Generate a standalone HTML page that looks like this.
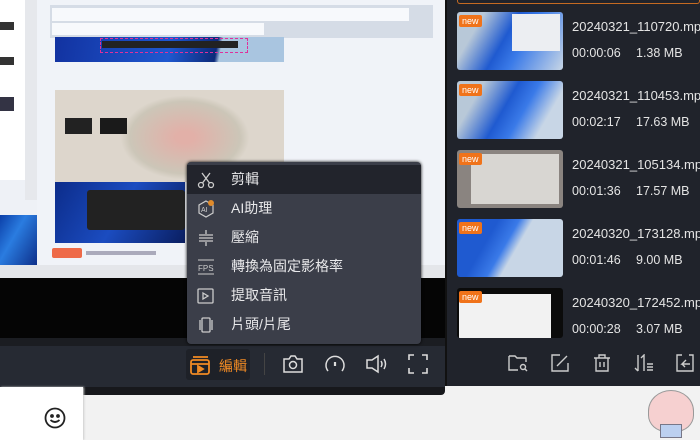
<!DOCTYPE html>
<html><head><meta charset="utf-8"><style>
*{margin:0;padding:0;box-sizing:border-box}
body{width:700px;height:440px;overflow:hidden;position:relative;background:#f2f2f2;font-family:"Liberation Sans","Noto Sans CJK TC",sans-serif}
.a{position:absolute}
.menu .it{position:absolute;left:0;width:234px;height:29px;color:#e8e8ea;font-size:14px;line-height:29px;padding-left:44px}
.menu .ic{position:absolute;left:10px;top:6px;width:18px;height:18px}
.th{position:absolute;left:457px;width:106px;height:58px;border-radius:3px;overflow:hidden}
.nw{position:absolute;left:2px;top:3px;background:#f0731a;color:#fff;font-size:9px;padding:0 3px;line-height:12px;border-radius:2px}
.nm{position:absolute;left:572px;color:#e4e4e4;font-size:13px;white-space:nowrap}
.mt{position:absolute;left:572px;color:#e4e4e4;font-size:12.5px;white-space:nowrap}
.mt b{position:absolute;left:64px;font-weight:normal}
</style></head><body>
<div class="a" style="left:0;top:0;width:445px;height:280px;background:#eef1f6"></div>
<div class="a" style="left:0;top:0;width:25px;height:180px;background:#fff"></div>
<div class="a" style="left:0;top:22px;width:14px;height:8px;background:#333"></div>
<div class="a" style="left:0;top:57px;width:14px;height:8px;background:#333"></div>
<div class="a" style="left:0;top:97px;width:14px;height:14px;background:#334"></div>
<div class="a" style="left:25px;top:0;width:12px;height:200px;background:#e6e8ec"></div>
<div class="a" style="left:0;top:215px;width:37px;height:50px;background:linear-gradient(120deg,#0b3fa8,#2a7ce0 40%,#0d2f8a)"></div>
<div class="a" style="left:37px;top:0;width:408px;height:265px;background:#f0f3f8"></div>
<div class="a" style="left:50px;top:5px;width:383px;height:33px;background:#d5dce6"></div>
<div class="a" style="left:52px;top:8px;width:357px;height:13px;background:#f7f9fc"></div>
<div class="a" style="left:52px;top:23px;width:212px;height:12px;background:#f7f9fc"></div>
<div class="a" style="left:55px;top:37px;width:229px;height:25px;background:linear-gradient(100deg,#1232a0,#1f58d0 50%,#0d2a7a 70%,#a9c5e0 72%)"></div>
<div class="a" style="left:100px;top:38px;width:148px;height:15px;border:1px dashed #e0309a"></div>
<div class="a" style="left:102px;top:41px;width:136px;height:7px;background:#222"></div>
<div class="a" style="left:55px;top:90px;width:229px;height:92px;background:#ddd6cc"></div>
<div class="a" style="left:120px;top:95px;width:130px;height:85px;background:radial-gradient(ellipse,#e2b0a8 10%,#ccc6b8 60%,transparent 70%)"></div>
<div class="a" style="left:65px;top:118px;width:27px;height:16px;background:#222"></div>
<div class="a" style="left:100px;top:118px;width:27px;height:16px;background:#1a1a1a"></div>
<div class="a" style="left:55px;top:182px;width:130px;height:61px;background:linear-gradient(120deg,#0c2c8a,#1b4cc0 50%,#0a1e60)"></div>
<div class="a" style="left:87px;top:190px;width:98px;height:40px;background:#222;border-radius:3px"></div>
<div class="a" style="left:52px;top:248px;width:30px;height:10px;background:#ee6a48;border-radius:2px"></div>
<div class="a" style="left:86px;top:251px;width:70px;height:4px;background:#aab"></div>
<div class="a" style="left:0;top:265px;width:445px;height:14px;background:#e4e6ea"></div>
<div class="a" style="left:0;top:278px;width:445px;height:62px;background:#050505"></div>
<div class="a" style="left:0;top:338px;width:445px;height:8px;background:#1b1d22"></div>
<div class="a" style="left:0;top:346px;width:445px;height:41px;background:#262a33"></div>
<div class="a" style="left:0;top:387px;width:445px;height:8px;background:#17181c;border-radius:0 0 4px 0"></div>
<div class="a" style="left:186px;top:349px;width:64px;height:31px;background:#1e2128;border-radius:3px"></div>
<svg class="a" style="left:190px;top:354px" width="22" height="22" viewBox="0 0 22 22" fill="none" stroke="#f08a24" stroke-width="1.8"><rect x="1" y="6" width="18" height="14" rx="2"/><path d="M1 10h18M3 3l15 0"/><path d="M8 12l5 3-5 3z" fill="#f08a24"/></svg>
<div class="a" style="left:219px;top:356px;color:#f08a24;font-size:14px">編輯</div>
<div class="a" style="left:264px;top:353px;width:1px;height:22px;background:#444"></div>
<svg class="a" style="left:282px;top:354px" width="22" height="20" viewBox="0 0 22 20" fill="none" stroke="#ddd" stroke-width="1.5"><path d="M2 5h5l2-3h4l2 3h5v13H2z"/><circle cx="11" cy="11" r="3.5"/></svg>
<svg class="a" style="left:324px;top:354px" width="22" height="20" viewBox="0 0 22 20" fill="none" stroke="#ddd" stroke-width="1.5"><path d="M4 17A9 9 0 1 1 18 17"/><path d="M11 8v4" stroke-width="2.2"/></svg>
<svg class="a" style="left:365px;top:354px" width="24" height="20" viewBox="0 0 24 20" fill="none" stroke="#ddd" stroke-width="1.5"><path d="M2 6h5l6-4v16l-6-4H2z"/><path d="M16 7q2 3 0 6M19 5q3 5 0 10"/></svg>
<svg class="a" style="left:408px;top:354px" width="20" height="20" viewBox="0 0 20 20" fill="none" stroke="#ddd" stroke-width="1.6"><path d="M1 6V1h5M14 1h5v5M19 14v5h-5M6 19H1v-5"/></svg>
<div class="a" style="left:0;top:387px;width:83px;height:53px;background:#fff;box-shadow:1px 0 2px #ccc"></div>
<svg class="a" style="left:44px;top:407px" width="22" height="22" viewBox="0 0 22 22" fill="none" stroke="#222" stroke-width="1.8"><circle cx="11" cy="11" r="9.5"/><circle cx="8" cy="9" r="1" fill="#222"/><circle cx="14" cy="9" r="1" fill="#222"/><path d="M6.5 13q4.5 4 9 0"/></svg>
<div class="a menu" style="left:187px;top:162px;width:234px;height:182px;background:#3b3e49;border-radius:4px;overflow:hidden;box-shadow:0 0 3px #000">
<div class="it" style="top:3px;background:#22242c">剪輯<svg class="ic" viewBox="0 0 18 18" fill="none" stroke="#ccc" stroke-width="1.3"><circle cx="4" cy="14" r="2.5"/><circle cx="14" cy="14" r="2.5"/><path d="M5.5 12L13 2M12.5 12L5 2"/></svg></div>
<div class="it" style="top:32px">AI助理<svg class="ic" viewBox="0 0 18 18" fill="none" stroke="#ccc" stroke-width="1.2"><path d="M9 1l7 4v8l-7 4-7-4V5z"/><text x="4" y="12" font-size="7" fill="#ccc" stroke="none">AI</text><circle cx="14" cy="3" r="3" fill="#e08a2a" stroke="none"/></svg></div>
<div class="it" style="top:61px">壓縮<svg class="ic" viewBox="0 0 18 18" fill="none" stroke="#ccc" stroke-width="1.3"><path d="M2 9h14M2 6h14M2 12h14M9 1v4M9 13v4"/></svg></div>
<div class="it" style="top:90px">轉換為固定影格率<svg class="ic" viewBox="0 0 18 18"><path d="M1 2h16M1 16h16" stroke="#ccc"/><text x="1" y="13" font-size="8" fill="#ccc">FPS</text></svg></div>
<div class="it" style="top:119px">提取音訊<svg class="ic" viewBox="0 0 18 18" fill="none" stroke="#ccc" stroke-width="1.3"><rect x="1" y="2" width="15" height="14" rx="1"/><path d="M6 6l5 3-5 3z"/></svg></div>
<div class="it" style="top:148px">片頭/片尾<svg class="ic" viewBox="0 0 18 18" fill="none" stroke="#ccc" stroke-width="1.3"><rect x="5" y="2" width="8" height="14" rx="1"/><path d="M3 4v10M15 4v10"/></svg></div>
</div>
<div class="a" style="left:445px;top:0;width:255px;height:386px;background:#20232b;border-left:2px solid #111"></div>
<div class="a" style="left:457px;top:0;width:243px;height:4px;border:1px solid #c46a22;border-top:none;border-radius:0 0 3px 3px"></div>
<div class="th" style="top:12px;background:linear-gradient(120deg,#b8c8d8 20%,#1f5ad0 45%,#3a7ae8 60%,#c8d6e6)"><div class="a" style="left:55px;top:2px;width:48px;height:37px;background:#eceef2"></div><span class="nw">new</span></div>
<div class="th" style="top:81px;background:linear-gradient(120deg,#b8c8d8 20%,#1f5ad0 45%,#3a7ae8 60%,#c8d6e6 80%)"><span class="nw">new</span></div>
<div class="th" style="top:150px;background:#8a8480"><div class="a" style="left:14px;top:4px;width:88px;height:50px;background:#d8d6d2"></div><span class="nw">new</span></div>
<div class="th" style="top:219px;background:linear-gradient(120deg,#1f5ad0 30%,#3a7ae8 45%,#c8d6e6 55%)"><span class="nw">new</span></div>
<div class="th" style="top:288px;height:50px;background:#0b0b0b"><div class="a" style="left:2px;top:6px;width:92px;height:44px;background:#f2f2f2"></div><span class="nw">new</span></div>
<div class="nm" style="top:19px">20240321_110720.mp</div><div class="mt" style="top:46px">00:00:06<b>1.38 MB</b></div>
<div class="nm" style="top:88px">20240321_110453.mp</div><div class="mt" style="top:115px">00:02:17<b>17.63 MB</b></div>
<div class="nm" style="top:157px">20240321_105134.mp</div><div class="mt" style="top:184px">00:01:36<b>17.57 MB</b></div>
<div class="nm" style="top:226px">20240320_173128.mp</div><div class="mt" style="top:253px">00:01:46<b>9.00 MB</b></div>
<div class="nm" style="top:295px">20240320_172452.mp</div><div class="mt" style="top:322px">00:00:28<b>3.07 MB</b></div>
<svg class="a" style="left:508px;top:354px" width="20" height="18" viewBox="0 0 20 18" fill="none" stroke="#ccc" stroke-width="1.4"><path d="M1 2h6l2 2h9v4M1 2v14h9"/><circle cx="15" cy="13" r="2.5"/><path d="M17 15l2 2"/></svg>
<svg class="a" style="left:551px;top:354px" width="18" height="18" viewBox="0 0 18 18" fill="none" stroke="#ccc" stroke-width="1.4"><path d="M9 1H1v16h16V9M6 12L16 2"/></svg>
<svg class="a" style="left:593px;top:354px" width="18" height="18" viewBox="0 0 18 18" fill="none" stroke="#ccc" stroke-width="1.4"><path d="M1 4h16M6 4V1h6v3M3 4v13h12V4M7 8v5M11 8v5"/></svg>
<svg class="a" style="left:634px;top:354px" width="20" height="18" viewBox="0 0 20 18" fill="none" stroke="#ccc" stroke-width="1.4"><path d="M4 1v16M1 14l3 3M10 17V1l-3 3M13 10h6M13 13h6M13 16h6"/></svg>
<svg class="a" style="left:676px;top:354px" width="18" height="18" viewBox="0 0 18 18" fill="none" stroke="#ccc" stroke-width="1.4"><path d="M6 1H1v16h16V1h-4M10 6L6 10h8M6 10l3 3"/></svg>
<div class="a" style="left:648px;top:390px;width:46px;height:42px;background:#f6d0d0;border-radius:50% 50% 40% 40%;border:1px solid #999"></div>
<div class="a" style="left:660px;top:424px;width:22px;height:14px;background:#bcd0f0;border:1px solid #778"></div>
</body></html>
